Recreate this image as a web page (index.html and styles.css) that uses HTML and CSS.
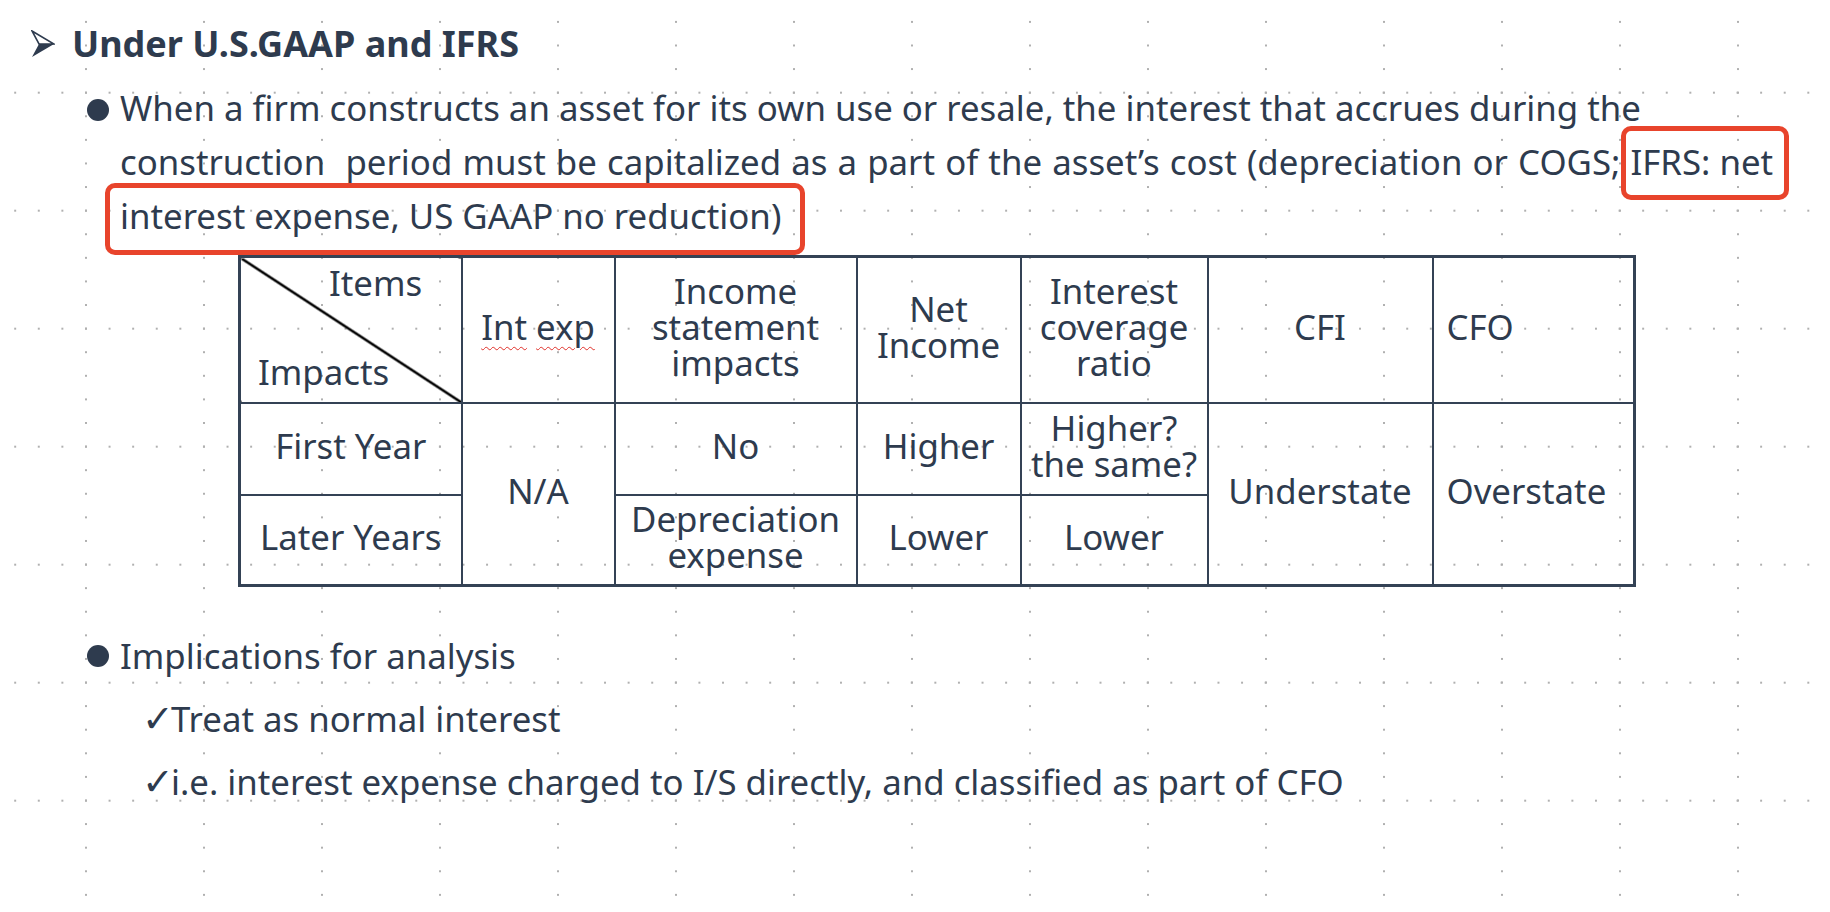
FILE: index.html
```html
<!DOCTYPE html>
<html lang="en">
<head>
<meta charset="utf-8">
<title>Capitalized interest</title>
<link rel="stylesheet" href="styles.css">
</head>
<body>
<div class="page">
  <h1 class="heading">
    <svg class="heading-arrow" viewBox="0 0 24 28" width="24" height="28" aria-hidden="true">
      <path d="M1 1 L23 14 L8 14 Z" fill="none" stroke="#2e3b4e" stroke-width="1.6" stroke-linejoin="miter"/>
      <path d="M8 14 L23 14 L1 27 Z" fill="#2e3b4e"/>
    </svg>
    <span>Under U.S.GAAP and IFRS</span>
  </h1>

  <div class="item">
    <span class="dot"></span>
    <p class="item-text">When a firm constructs an asset for its own use or resale, the interest that accrues during the<br><span class="line-two">construction&nbsp; period must be capitalized as a part of the asset’s cost (depreciation or COGS; <span class="hl hl-a">IFRS: net</span></span><br><span class="hl hl-b">interest expense, US GAAP no reduction)</span></p>
  </div>

  <table class="impact-table">
    <colgroup>
      <col class="c1"><col class="c2"><col class="c3"><col class="c4"><col class="c5"><col class="c6"><col class="c7">
    </colgroup>
    <tr class="r-head">
      <td class="diag">
        <div class="diag-items">Items</div>
        <div class="diag-impacts">Impacts</div>
      </td>
      <td><span class="squiggle">Int</span> <span class="squiggle">exp</span></td>
      <td>Income<br>statement<br>impacts</td>
      <td>Net<br>Income</td>
      <td>Interest<br>coverage<br>ratio</td>
      <td>CFI</td>
      <td class="left">CFO</td>
    </tr>
    <tr class="r-one">
      <td>First Year</td>
      <td rowspan="2">N/A</td>
      <td>No</td>
      <td>Higher</td>
      <td>Higher?<br>the same?</td>
      <td rowspan="2">Understate</td>
      <td rowspan="2" class="left">Overstate</td>
    </tr>
    <tr class="r-two">
      <td>Later Years</td>
      <td>Depreciation<br>expense</td>
      <td>Lower</td>
      <td>Lower</td>
    </tr>
  </table>

  <div class="item item-lower">
    <span class="dot"></span>
    <p class="item-text">Implications for analysis</p>
  </div>
  <ul class="checks">
    <li><span class="tick">✓</span>Treat as normal interest</li>
    <li><span class="tick">✓</span>i.e. interest expense charged to I/S directly, and classified as part of CFO</li>
  </ul>
</div>
</body>
</html>
```

FILE: styles.css
```css
html, body {
  margin: 0;
  padding: 0;
}

body {
  width: 1830px;
  min-height: 912px;
  background-color: #ffffff;
  background-image:
    radial-gradient(circle, #b0b0b0 0 1px, rgba(176,176,176,0) 1.5px),
    radial-gradient(circle, #b0b0b0 0 1px, rgba(176,176,176,0) 1.5px);
  background-size: 118px 23.6px, 23.6px 118px;
  background-position: 27px 10.1px, 3.4px 33.7px;
  color: #2e3b4e;
  font-family: "Noto Sans", "DejaVu Sans", sans-serif;
  overflow: hidden;
}

.page {
  position: relative;
  padding-top: 17px;
}

.heading {
  display: flex;
  align-items: center;
  margin: 0 0 10px 31px;
  font-size: 36px;
  font-weight: 700;
  line-height: 54px;
  height: 54px;
}

.heading-arrow {
  width: 24px;
  height: 28px;
  margin-right: 17px;
  flex: none;
}

.item {
  display: flex;
  align-items: flex-start;
  margin-left: 87px;
}

.dot {
  flex: none;
  width: 22px;
  height: 22px;
  border-radius: 50%;
  background: #2e3b4e;
  margin-top: 18px;
  margin-right: 11px;
}

.item-text {
  margin: 0;
  font-size: 34.8px;
  line-height: 54px;
  white-space: nowrap;
}

.line-two {
  word-spacing: 1.1px;
}

.hl {
  position: relative;
  word-spacing: normal;
}

.hl::after {
  content: "";
  position: absolute;
  border: 5px solid #e8442c;
  border-radius: 10px;
  pointer-events: none;
}

.hl-a::after {
  left: -10px;
  right: -16px;
  top: -12px;
  bottom: -15px;
}

.hl-b::after {
  left: -15px;
  right: -24px;
  top: -9px;
  bottom: -16px;
}

.impact-table {
  margin: 12px 0 0 238px;
  width: 1395px;
  table-layout: fixed;
  border-collapse: collapse;
  border: 3px solid #344255;
  font-size: 34.8px;
  line-height: 36px;
}

.c1 { width: 222px; }
.c2 { width: 153px; }
.c3 { width: 242px; }
.c4 { width: 164px; }
.c5 { width: 187px; }
.c6 { width: 225px; }
.c7 { width: 202px; }

.impact-table td {
  border: 2px solid #344255;
  padding: 0 4px 5px;
  text-align: center;
  vertical-align: middle;
  white-space: nowrap;
}

.impact-table td.left {
  text-align: left;
  padding-left: 13px;
}

.r-head { height: 146px; }
.r-one { height: 92px; }
.r-two { height: 91px; }

.impact-table td.diag {
  padding: 0;
  vertical-align: top;
  text-align: left;
  background-image: linear-gradient(to top right, rgba(0,0,0,0) calc(50% - 1.6px), #000 calc(50% - 0.9px), #000 calc(50% + 0.9px), rgba(0,0,0,0) calc(50% + 1.6px));
}

.diag-items {
  padding: 7px 0 0 88px;
}

.diag-impacts {
  padding: 53px 0 0 17px;
}

.squiggle {
  text-decoration: underline wavy #e0302a;
  text-decoration-thickness: 1px;
  text-underline-offset: 6px;
}

.item-lower {
  margin-top: 37px;
}

.item-lower .item-text {
  line-height: 63px;
}

.item-lower .dot {
  margin-top: 21px;
}

.checks {
  list-style: none;
  margin: 0;
  padding: 0 0 0 142px;
  font-size: 34.8px;
  line-height: 63px;
}

.tick {
  display: inline-block;
  font-family: "DejaVu Sans", sans-serif;
  font-size: 38px;
  line-height: 0;
  width: 29px;
}
```
